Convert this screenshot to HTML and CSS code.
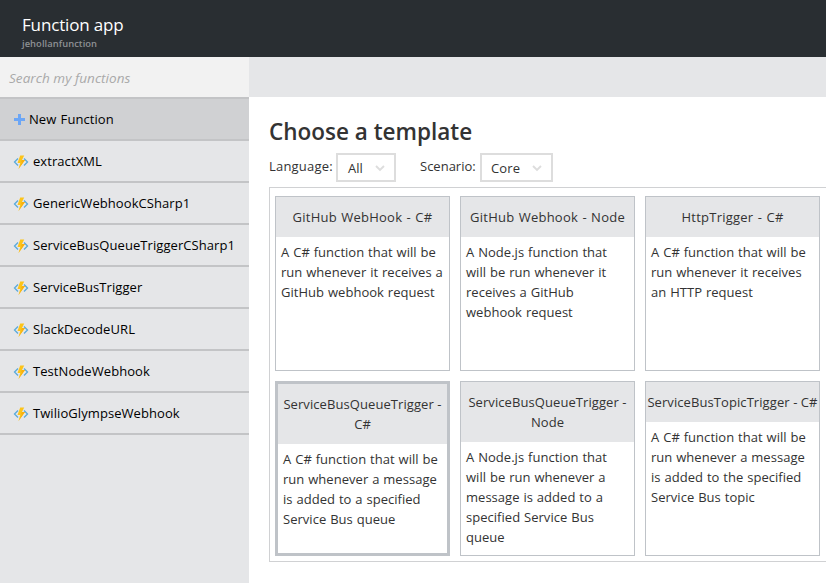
FILE: index.html
```html
<!DOCTYPE html>
<html lang="en">
<head>
<meta charset="utf-8">
<title>Function app</title>
<link rel="stylesheet" href="styles.css">
</head>
<body>
<svg class="defs" width="0" height="0">
  <symbol id="fn" viewBox="0 0 16 16">
    <path d="M5 4.500 1.500 8 5 11.500M11 4.500 14.500 8 11 11.500" fill="none" stroke="#59aadb" stroke-width="1.300"/>
    <path d="M7.200 1.500h4L9 6h3L5.500 15l1.700-6H4.500z" fill="#fcc419"/>
    <path d="M9 6h3L5.500 15l3.500-7H8z" fill="#f8b010"/>
  </symbol>
  <symbol id="chevron" viewBox="0 0 10 7">
    <path d="M1 1l4 4 4-4" fill="none" stroke="#ddd" stroke-width="1.900"/>
  </symbol>
</svg>
<header class="header">
  <h1>Function app</h1>
  <p>jehollanfunction</p>
</header>
<div class="layout">
  <nav class="sidebar">
    <div class="search">Search my functions</div>
    <ul class="functions">
      <li class="new"><svg class="plus" viewBox="0 0 11 11"><path d="M5.500 0v11M0 5.500h11" stroke="#6ca6f5" stroke-width="3"/></svg><span>New Function</span></li>
      <li><svg class="fn"><use href="#fn"/></svg><span>extractXML</span></li>
      <li><svg class="fn"><use href="#fn"/></svg><span>GenericWebhookCSharp1</span></li>
      <li><svg class="fn"><use href="#fn"/></svg><span>ServiceBusQueueTriggerCSharp1</span></li>
      <li><svg class="fn"><use href="#fn"/></svg><span>ServiceBusTrigger</span></li>
      <li><svg class="fn"><use href="#fn"/></svg><span>SlackDecodeURL</span></li>
      <li><svg class="fn"><use href="#fn"/></svg><span>TestNodeWebhook</span></li>
      <li><svg class="fn"><use href="#fn"/></svg><span>TwilioGlympseWebhook</span></li>
    </ul>
  </nav>
  <main class="main">
    <div class="topbar"></div>
    <section class="content">
      <h2>Choose a template</h2>
      <div class="filters">
        <label class="lang">Language:</label>
        <div class="select all"><span>All</span><svg><use href="#chevron"/></svg></div>
        <label class="scen">Scenario:</label>
        <div class="select core"><span>Core</span><svg><use href="#chevron"/></svg></div>
      </div>
      <div class="templates">
        <article class="card"><h3 class="wide">GitHub WebHook - C#</h3><p>A C# function that will be<br>run whenever it receives a<br>GitHub webhook request</p></article>
        <article class="card"><h3 class="wide">GitHub Webhook - Node</h3><p>A Node.js function that<br>will be run whenever it<br>receives a GitHub<br>webhook request</p></article>
        <article class="card"><h3 class="wide">HttpTrigger - C#</h3><p>A C# function that will be<br>run whenever it receives<br>an HTTP request</p></article>
        <article class="card selected"><h3>ServiceBusQueueTrigger -<br>C#</h3><p>A C# function that will be<br>run whenever a message<br>is added to a specified<br>Service Bus queue</p></article>
        <article class="card"><h3>ServiceBusQueueTrigger -<br>Node</h3><p>A Node.js function that<br>will be run whenever a<br>message is added to a<br>specified Service Bus<br>queue</p></article>
        <article class="card"><h3>ServiceBusTopicTrigger - C#</h3><p>A C# function that will be<br>run whenever a message<br>is added to the specified<br>Service Bus topic</p></article>
      </div>
    </section>
  </main>
</div>
</body>
</html>
```
FILE: styles.css
```css
* { box-sizing: border-box; }
body {
  margin: 0;
  height: 583px;
  overflow: hidden;
  background: #fff;
  color: #333;
  font: 13px/20px "Open Sans", "Noto Sans", sans-serif;
}
h1, h2, h3, p, ul { margin: 0; padding: 0; font-weight: 400; }
.defs { position: absolute; }
.header { height: 57px; padding: 13px 22px 0; background: #292e32; }
.header h1 { font-size: 17px; line-height: 24px; letter-spacing: -0.16px; color: #fff; }
.header p { font-size: 9.400px; line-height: 13px; font-weight: 600; letter-spacing: 0.05px; color: #8e9194; }
.layout { display: flex; height: 526px; }
.sidebar { width: 249px; flex: none; background: #e5e6e8; color: #000; }
.search {
  height: 40px;
  padding: 11px 9px;
  font-size: 13.500px;
  letter-spacing: 0.06px;
  line-height: 20px;
  background: #f2f2f2;
  color: #a9a9a9;
  font-style: italic;
}
.functions { list-style: none; border-top: 2px solid #c3c4c6; }
.functions li {
  display: flex;
  align-items: center;
  height: 42px;
  padding-left: 13px;
  border-bottom: 2px solid #c3c4c6;
  letter-spacing: 0.07px;
  white-space: nowrap;
}
.functions .new { background: #d0d1d3; padding-left: 14px; word-spacing: 0.8px; }
.plus { width: 11px; height: 11px; margin-right: 4px; }
.fn { width: 16px; height: 16px; margin: 2px 4px 0 0; }
.main { flex: 1; min-width: 0; overflow: hidden; }
.topbar { height: 40px; background: #e5e6e8; }
.content { padding: 18px 0 0 20px; }
h2 { font-size: 22.500px; line-height: 34px; font-weight: 600; white-space: nowrap; }
.filters { display: flex; margin-top: 4px; height: 29px; }
.filters label { padding-top: 3px; white-space: nowrap; }
.lang { width: 67px; letter-spacing: 0.2px; }
.scen { width: 60px; margin-left: 24px; }
.select {
  display: flex;
  justify-content: space-between;
  align-items: center;
  height: 29px;
  padding: 0 9px 0 10px;
  border: 2px solid #ddd;
}
.select svg { width: 10px; height: 7px; margin-top: 2px; }
.all { width: 60px; }
.core { width: 73px; padding-left: 9px; }
.core span { letter-spacing: 0.15px; }
.templates {
  display: grid;
  grid-template-columns: repeat(3, 175px);
  grid-auto-rows: 175px;
  gap: 10px;
  width: 600px;
  height: 375px;
  margin-top: 5px;
  padding: 8px 5px;
  border: 1px solid #d0d1d3;
}
.card { border: 1px solid #bfc3c8; white-space: nowrap; }
.card.selected { border-width: 3px; }
.card h3 {
  padding: 10px 0;
  background: #e5e6e8;
  font-size: 13px;
  line-height: 20px;
  letter-spacing: 0.08px;
  text-align: center;
}
.card h3.wide { letter-spacing: 0.24px; word-spacing: 0.7px; }
.card p { padding: 5px; letter-spacing: 0.03px; word-spacing: 0.500px; }
```
